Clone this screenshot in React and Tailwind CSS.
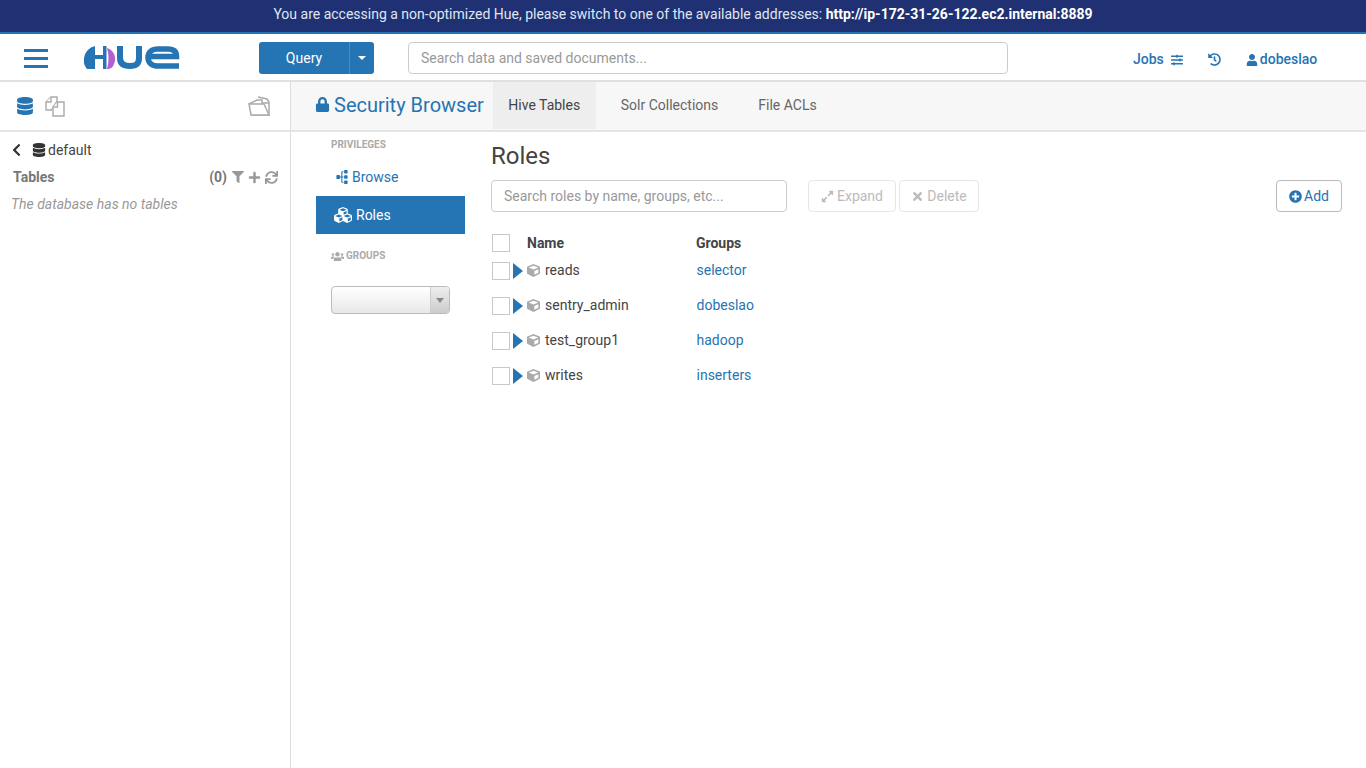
import {
  FaChevronLeft, FaCube, FaCubes, FaDatabase, FaExpandAlt, FaFilter, FaHistory, FaLock, FaPlus,
  FaPlusCircle, FaSitemap, FaSlidersH, FaSync, FaTimes, FaUser, FaUsers,
} from 'react-icons/fa';

const roles = [
  { name: 'reads', group: 'selector' },
  { name: 'sentry_admin', group: 'dobeslao' },
  { name: 'test_group1', group: 'hadoop' },
  { name: 'writes', group: 'inserters' },
];

const HueLogo = () => (
  <svg width="96" height="23" viewBox="0 0 96 23" fill="none">
    <path d="M11 0 A14 14 0 0 0 0 12 A13 13 0 0 0 3 23 L11 23 Z" fill="#2574b3" />
    <path d="M11 9 H19 V0 H22.5 V23 H19 V13 H11 Z" fill="#2574b3" />
    <path d="M23 2 C30 4 33 12 30 18 C29 21 27 23 23 23 C25 16 25 9 23 2 Z" fill="#b260cf" />
    <path d="M36 0 V12 C36 18 40 20 46 20 C52 20 55 18 55 12 V0" stroke="#2574b3" strokeWidth="6" />
    <path d="M95 20 H74 C68 20 64 17 64 11.5 C64 6 68 3 74 3 H84 C90 3 92.5 6 92.5 10.5 H65" stroke="#2574b3" strokeWidth="5.5" />
  </svg>
);

const CopyIcon = () => (
  <svg width="20" height="21" viewBox="0 0 20 21" fill="white" stroke="#aaa" strokeWidth="1.4" className="ml-[11px]">
    <path d="M6 1 H12 V5 L6.5 14 H1 V6 Z" />
    <path d="M6 1 V6 H1" />
    <path d="M12.5 6 H19 V20 H8 V11 Z" />
    <path d="M12.5 6 V11 H8" />
  </svg>
);

const FolderIcon = () => (
  <svg width="22" height="20" viewBox="0 0 22 20" fill="white" stroke="#aaa" strokeWidth="1.5" className="ml-auto">
    <path d="M10 1 L19 3 L21 6 V19 H3" />
    <path d="M1 8 L9 4 H14 V7 H21" />
    <path d="M1 8 H16 L21 19 H3 Z" />
  </svg>
);

const Checkbox = () => <div className="w-[18px] h-[18px] border border-[#c8c8c8] bg-white shrink-0" />;

const App = () => {
  return (
    <div className="h-[768px] overflow-hidden bg-white flex flex-col text-[14px] text-[#444]" style={{ fontFamily: 'Roboto, sans-serif' }}>
      {/* banner */}
      <div className="h-[34px] shrink-0 bg-[#1f3172] border-b-2 border-[#2574b3] text-center text-[14px] leading-[29px] text-[#dfe6f2]">
        You are accessing a non-optimized Hue, please switch to one of the available addresses: <b className="font-bold text-white">http://ip-172-31-26-122.ec2.internal:8889</b>
      </div>

      {/* top nav */}
      <div className="h-[48px] shrink-0 flex items-center border-b-2 border-[#e0e0e0]">
        <div className="ml-6 w-6 mt-[2px] flex flex-col gap-[5px]">
          <div className="h-[3px] bg-[#2574b3]" />
          <div className="h-[3px] bg-[#2574b3]" />
          <div className="h-[3px] bg-[#2574b3]" />
        </div>
        <div className="ml-[36px] w-[99px] mt-[1px]"><HueLogo /></div>
        <div className="ml-[76px] mt-[2px] flex h-[32px] w-[115px] rounded-[3px] bg-[#2574b3] text-white">
          <div className="w-[90px] text-center leading-[32px]">Query</div>
          <div className="flex-1 border-l border-[#4b8cc0] flex items-center justify-center">
            <div className="w-0 h-0 border-x-[4px] border-x-transparent border-t-[4px] border-t-white" />
          </div>
        </div>
        <div className="ml-[34px] mt-[2px] w-[600px] h-[32px] rounded-[4px] border border-[#ccc] px-3 leading-[30px] text-[#999]">Search data and saved documents...</div>
        <div className="ml-[125px] flex items-center text-[#2574b3] font-medium mt-[5px]">
          Jobs <FaSlidersH className="ml-[7px] text-[12px]" />
          <FaHistory className="ml-[25px] text-[13px]" />
          <FaUser className="ml-[25px] mr-[2px] text-[12px]" /> dobeslao
        </div>
      </div>

      <div className="flex-1 flex min-h-0">
        {/* left assist */}
        <div className="w-[291px] shrink-0 border-r border-[#ddd] flex flex-col">
          <div className="h-[50px] shrink-0 border-b-2 border-[#e5e5e5] flex items-center pl-4 pr-[20px]">
            <FaDatabase className="text-[#2574b3] text-[18px]" />
            <CopyIcon />
            <FolderIcon />
          </div>
          <div className="pl-[11px] pr-[12px] pt-[9px]">
            <div className="flex items-center h-[18px] text-[#444]">
              <FaChevronLeft className="text-[14px] w-[11px] text-[#333]" />
              <FaDatabase className="ml-[10px] text-[14px] text-[#333]" />
              <span className="ml-[2px]">default</span>
            </div>
            <div className="flex items-center h-[18px] mt-[9px] pl-[2px] text-[#777] font-bold">
              <span>Tables</span>
              <span className="ml-auto">(0)</span>
              <FaFilter className="ml-[5px] text-[12px] text-[#999]" />
              <FaPlus className="ml-[4px] text-[13px] text-[#999]" />
              <FaSync className="ml-[4px] text-[13px] text-[#999]" />
            </div>
            <div className="mt-[8px] italic text-[#999]">The database has no tables</div>
          </div>
        </div>

        <div className="flex-1 flex flex-col min-w-0">
          {/* sub nav */}
          <div className="h-[50px] shrink-0 bg-[#f7f7f7] border-b-2 border-[#e5e5e5] flex pl-[24px]">
            <div className="flex items-center text-[#2574b3] text-[20px] h-[46px]">
              <FaLock className="text-[15px] mr-[4px] -mt-[1px]" />
              Security Browser
            </div>
            <div className="ml-[9px] w-[103px] h-[47px] bg-[#eeeeee] text-center leading-[46px] text-[#444]">Hive Tables</div>
            <div className="ml-[25px] leading-[46px] text-[#666]">Solr Collections</div>
            <div className="ml-[40px] leading-[46px] text-[#666]">File ACLs</div>
          </div>

          <div className="flex-1 flex min-h-0">
            {/* side nav */}
            <div className="w-[149px] ml-[25px] shrink-0">
              <div className="pl-[15px] pt-[6px] text-[10px] leading-[14px] font-bold text-[#aaa]">PRIVILEGES</div>
              <div className="h-[38px] mt-[6px] flex items-center pl-[19px] text-[#2574b3]">
                <FaSitemap className="text-[14px] mr-[3px] -rotate-90" /> Browse
              </div>
              <div className="h-[38px] bg-[#2574b3] text-white flex items-center pl-[18px]">
                <FaCubes className="text-[18px] mr-[4px]" /> Roles
              </div>
              <div className="pl-[15px] mt-[15px] flex items-center text-[10px] leading-[14px] font-bold text-[#aaa]">
                <FaUsers className="text-[13px] mr-[2px]" /> GROUPS
              </div>
              <div className="ml-[15px] mt-[23px] w-[119px] h-[28px] rounded-[4px] border border-[#bbb] bg-gradient-to-b from-white to-[#e8e8e8] flex justify-end">
                <div className="w-[19px] border-l border-[#ccc] bg-gradient-to-b from-[#eee] to-[#ccc] rounded-r-[3px] flex items-center justify-center">
                  <div className="w-0 h-0 border-x-[4px] border-x-transparent border-t-[5px] border-t-[#888]" />
                </div>
              </div>
            </div>

            {/* content */}
            <div className="flex-1 min-w-0 pl-[26px] pr-[24px]">
              <div className="text-[24px] leading-[30px] mt-[9px] text-[#444]">Roles</div>
              <div className="flex items-center mt-[9px]">
                <div className="w-[296px] h-[32px] rounded-[4px] border border-[#ccc] px-3 leading-[30px] text-[#999]">Search roles by name, groups, etc...</div>
                <div className="ml-[21px] w-[88px] h-[32px] rounded-[4px] border border-[#e6e6e6] flex items-center justify-center text-[#bbb]">
                  <FaExpandAlt className="text-[13px] mr-[3px]" /> Expand
                </div>
                <div className="ml-[3px] w-[80px] h-[32px] rounded-[4px] border border-[#e6e6e6] flex items-center justify-center text-[#bbb]">
                  <FaTimes className="text-[13px] mr-[3px]" /> Delete
                </div>
                <div className="ml-auto w-[66px] h-[32px] rounded-[4px] border border-[#bbb] flex items-center justify-center text-[#2574b3]">
                  <FaPlusCircle className="text-[13px] mr-[2px]" /> Add
                </div>
              </div>

              {/* roles table */}
              <div className="mt-[21px] flex items-center h-[20px] font-bold text-[#444]">
                <div className="ml-[1px] w-[35px]"><Checkbox /></div>
                <div className="w-[169px]">Name</div>
                <div>Groups</div>
              </div>
              <div>
                {roles.map((role) => (
                  <div key={role.name} className="flex items-center h-[35px]">
                    <div className="ml-[1px] w-[21px]"><Checkbox /></div>
                    <div className="w-0 h-0 border-y-[8px] border-y-transparent border-l-[10px] border-l-[#2574b3]" />
                    <FaCube className="ml-[4px] text-[13px] text-[#aaa]" />
                    <div className="ml-[5px] w-[151.5px] text-[#444]">{role.name}</div>
                    <div className="text-[#2574b3]">{role.group}</div>
                  </div>
                ))}
              </div>
            </div>
          </div>
        </div>
      </div>
    </div>
  );
};

export default App;
